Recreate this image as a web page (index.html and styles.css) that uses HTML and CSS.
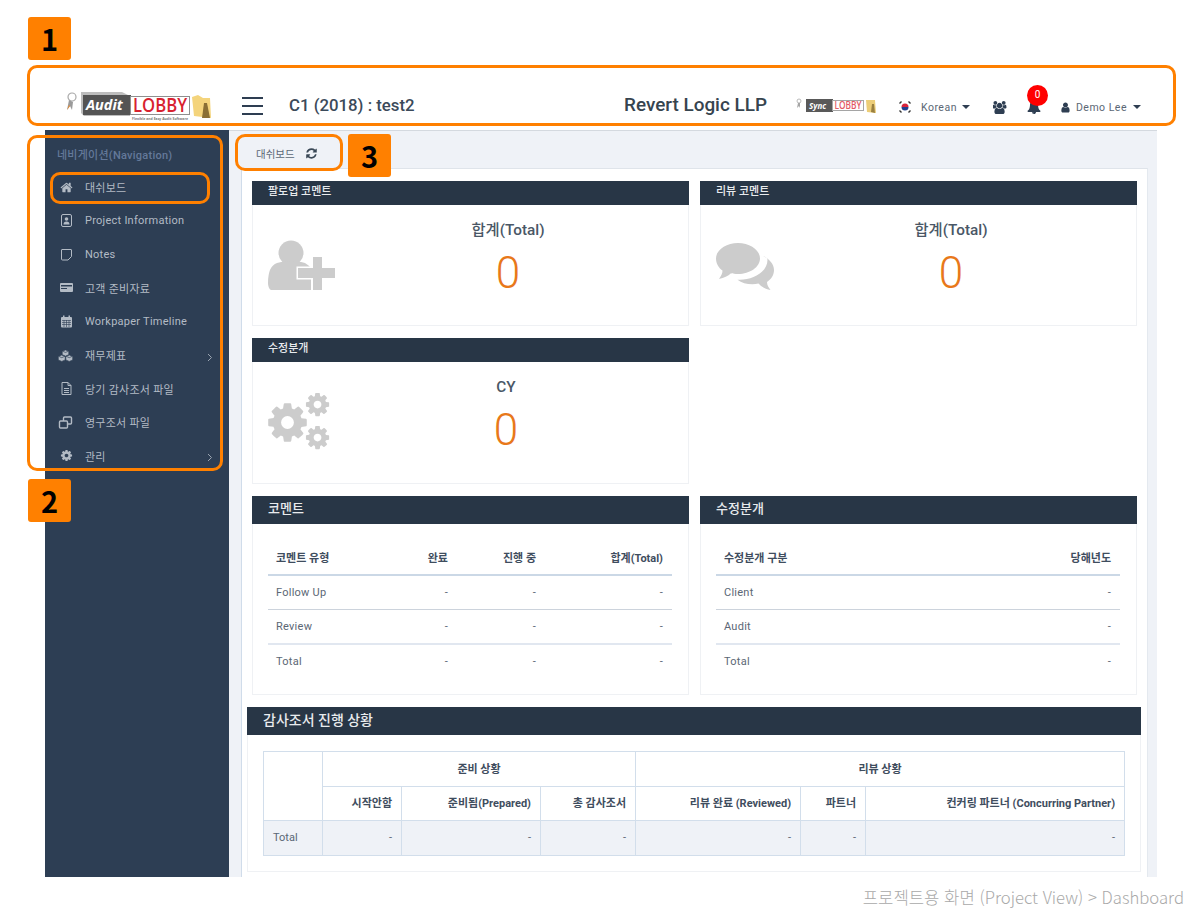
FILE: index.html
```html
<!DOCTYPE html>
<html lang="ko">
<head>
<meta charset="utf-8">
<title>Audit Lobby Dashboard</title>
<link rel="stylesheet" href="styles.css">
</head>
<body>
<header class="topbar">
  <svg class="logo" width="148" height="30" viewBox="0 0 148 30">
    <circle cx="8" cy="6" r="4" fill="#fff" stroke="#a9a9a9" stroke-width="1.2"/>
    <path d="M5 9 L3 19 L6 15 L8 19 L9 11 Z" fill="#9a9a9a"/>
    <path d="M3 19 L5 14 L6 15 Z" fill="#e98a2c"/>
    <path d="M17 1 H58 L66 5 V25 H20 L17 22 Z" fill="#bdbdbd"/>
    <rect x="19" y="4" width="48" height="20" fill="#545454"/>
    <text x="22" y="19" class="logo-audit">Audit</text>
    <rect x="66.500" y="5.500" width="59" height="18" fill="#fff" stroke="#8f8f8f"/>
    <text x="69" y="21" class="logo-lobby" textLength="54" lengthAdjust="spacingAndGlyphs">LOBBY</text>
    <text x="68" y="29" class="logo-tag" textLength="56" lengthAdjust="spacingAndGlyphs">Flexible and Easy Audit Software</text>
    <path d="M128 6 L134 4 L139 7 H146 L147 27 L130 25 Z" fill="#f4d47c"/>
    <path d="M138 27 L140 12 L143 12 L146 27 Z" fill="#8a6f35"/>
  </svg>
  <button class="burger" type="button" aria-label="menu"><span></span><span></span><span></span></button>
  <div class="project-title">C1 (2018) : test2</div>
  <div class="firm">Revert Logic LLP</div>
  <svg class="sync-logo" width="80" height="16" viewBox="0 0 80 16">
    <circle cx="3" cy="3" r="2" fill="#fff" stroke="#aaa" stroke-width=".8"/>
    <path d="M2 5 L1 10 L3 8 L4 10 L4 5 Z" fill="#a5a5a5"/>
    <rect x="10" y="1" width="27" height="13" fill="#595959"/>
    <text x="13" y="10.500" class="sync-text">Sync</text>
    <rect x="36.500" y="2.500" width="31" height="10" fill="#fff" stroke="#a5a5a5"/>
    <text x="38.500" y="11" class="sync-lobby" textLength="27" lengthAdjust="spacingAndGlyphs">LOBBY</text>
    <path d="M70 2 H79 L80 15 L71 14 Z" fill="#eccd78"/>
    <path d="M75 14 L76 6 L78 6 L79 15 Z" fill="#9a8040"/>
  </svg>
  <svg class="flag" width="14" height="14" viewBox="0 0 14 14">
    <circle cx="7" cy="7" r="7" fill="#fff"/>
    <path d="M3.500 7 A3.500 3.500 0 0 1 10.500 7 Z" fill="#d8243c"/>
    <path d="M3.500 7 A3.500 3.500 0 0 0 10.500 7 Z" fill="#22408f"/>
    <path d="M1.500 3.500 L3.500 1.500 M10.500 1.500 L12.500 3.500 M1.500 10.500 L3.500 12.500 M10.500 12.500 L12.500 10.500" stroke="#333" stroke-width="1.400"/>
  </svg>
  <span class="top-link lang">Korean</span><i class="caret"></i>
  <svg class="users" width="14" height="13" viewBox="0 0 1920 1792"><path fill="#2e3e52" d="M529 896q-162 5-265 128h-134q-82 0-138-40.500t-56-118.500q0-353 124-353 6 0 43.500 21t97.500 42.500 119 21.500q67 0 133-23-5 37-5 66 0 139 81 256zm1071 637q0 120-73 189.500t-194 69.500h-874q-121 0-194-69.500t-73-189.500q0-53 3.500-103.500t14-109 26.500-108.500 43-97.500 62-81 85.500-53.500 111.500-20q10 0 43 21.500t73 48 107 48 135 21.500 135-21.500 107-48 73-48 43-21.500q61 0 111.500 20t85.500 53.500 62 81 43 97.500 26.500 108.500 14 109 3.500 103.500zm-1024-1277q0 106-75 181t-181 75-181-75-75-181 75-181 181-75 181 75 75 181zm704 384q0 159-112.500 271.500t-271.500 112.500-271.500-112.500-112.500-271.500 112.500-271.500 271.500-112.500 271.500 112.500 112.500 271.500zm576 225q0 78-56 118.500t-138 40.500h-134q-103-123-265-128 81-117 81-256 0-29-5-66 66 23 133 23 59 0 119-21.500t97.500-42.500 43.500-21q124 0 124 353zm-128-609q0 106-75 181t-181 75-181-75-75-181 75-181 181-75 181 75 75 181z"/></svg>
  <div class="bell-wrap">
    <svg width="14" height="14" viewBox="0 0 1792 1792"><path fill="#2e3e52" d="M912 1696q0-16-16-16-59 0-101.500-42.500t-42.500-101.500q0-16-16-16t-16 16q0 73 51.500 124.500t124.500 51.500q16 0 16-16zm816-288q0 52-38 90t-90 38h-448q0 106-75 181t-181 75-181-75-75-181h-448q-52 0-90-38t-38-90q50-42 91-88t85-119.500 74.500-158.500 50-206 19.500-260q0-152 117-282.500t307-158.500q-8-19-8-39 0-40 28-68t68-28 68 28 28 68q0 20-8 39 190 28 307 158.500t117 282.500q0 139 19.500 260t50 206 74.500 158.500 85 119.500 91 88z"/></svg>
    <span class="badge">0</span>
  </div>
  <svg class="person" width="9" height="11" viewBox="200 100 1400 1600"><path fill="#2e3e52" d="M1536 1399q0 109-62.500 187t-150.500 78h-854q-88 0-150.500-78t-62.500-187q0-85 8.500-160.500t31.500-152 58.500-131 94-89 134.500-34.500q131 128 313 128t313-128q76 0 134.500 34.500t94 89 58.500 131 31.500 152 8.500 160.500zm-256-887q0 159-112.500 271.500t-271.500 112.500-271.500-112.500-112.500-271.500 112.500-271.500 271.500-112.500 271.500 112.500 112.500 271.500z"/></svg>
  <span class="top-link user-name">Demo Lee</span><i class="caret caret-user"></i>
</header>

<div class="app">
  <nav class="sidebar">
    <div class="nav-label">네비게이션(Navigation)</div>
    <a class="nav-item">
      <svg class="nav-icon" width="13" height="13" viewBox="0 0 1792 1792"><path d="M1472 992v480q0 26-19 45t-45 19h-384v-384h-256v384h-384q-26 0-45-19t-19-45v-480q0-1 .5-3t.5-3l575-474 575 474q1 2 1 6zm223-69l-62 74q-8 9-21 11h-3q-13 0-21-7l-692-577-692 577q-12 8-24 7-13-2-21-11l-62-74q-8-10-7-23.500t11-21.500l719-599q32-26 76-26t76 26l244 204v-195q0-14 9-23t23-9h192q14 0 23 9t9 23v408l219 182q10 8 11 21.500t-7 23.500z"/></svg>
      <span>대쉬보드</span>
    </a>
    <a class="nav-item">
      <svg class="nav-icon" width="13" height="13" viewBox="0 0 13 13"><rect x="1.500" y=".5" width="10" height="12" rx="1.500" fill="none" stroke="currentColor"/><circle cx="6.500" cy="5" r="1.800"/><path d="M3.500 10.500q0-3 3-3t3 3z"/></svg>
      <span>Project Information</span>
    </a>
    <a class="nav-item">
      <svg class="nav-icon" width="13" height="13" viewBox="0 0 13 13"><path d="M2 1.500h9a.5.5 0 0 1 .5.5v6.500l-3.500 3.500h-5.500a1 1 0 0 1-1-1v-9a.5.5 0 0 1 .5-.5z" fill="none" stroke="currentColor"/></svg>
      <span>Notes</span>
    </a>
    <a class="nav-item">
      <svg class="nav-icon" width="13" height="13" viewBox="0 0 13 13"><rect y="2" width="13" height="9" rx="1"/><rect x="1" y="4" width="11" height="1.500" fill="#2d3e54"/><rect x="1" y="7" width="6" height="1" fill="#2d3e54"/></svg>
      <span>고객 준비자료</span>
    </a>
    <a class="nav-item">
      <svg class="nav-icon" width="13" height="13" viewBox="0 0 13 13"><rect x="1" y="2" width="11" height="10.500" rx="1"/><rect x="3" y="0.500" width="1.500" height="3"/><rect x="8.500" y="0.500" width="1.500" height="3"/><path d="M2 5.500h9M2 7.500h9M2 9.500h9M4 5v7M6.500 5v7M9 5v7" stroke="#2d3e54" stroke-width=".6"/></svg>
      <span>Workpaper Timeline</span>
    </a>
    <a class="nav-item">
      <svg class="nav-icon nav-icon-wide" width="16" height="13" viewBox="0 0 16 13"><g fill="currentColor" stroke="#2d3e54" stroke-width=".7"><path d="M8 .5l3.500 1.500v3.600L8 7.200 4.500 5.600V2zM4 6l3.700 1.600v3.600L4 12.800.3 11.200V7.600zM12 6l3.700 1.600v3.600L12 12.800l-3.700-1.600V7.600z"/></g><path d="M8 3.200L5 2M8 3.200L11 2M4 8.800L1 7.500M4 8.800L7 7.500M12 8.800L9 7.500M12 8.800L15 7.500" stroke="#2d3e54" stroke-width=".7"/></svg>
      <span>재무제표</span>
      <svg class="chev" width="6" height="9" viewBox="0 0 6 9"><path d="M1 1l3.500 3.500L1 8" fill="none" stroke="currentColor"/></svg>
    </a>
    <a class="nav-item">
      <svg class="nav-icon" width="13" height="13" viewBox="0 0 13 13"><path d="M2 .5h6l3 3v9H2zM8 .5v3h3" fill="none" stroke="currentColor"/><path d="M4 6h5v1H4zM4 8h5v1H4zM4 10h5v1H4z"/></svg>
      <span>당기 감사조서 파일</span>
    </a>
    <a class="nav-item">
      <svg class="nav-icon nav-icon-wide" width="14" height="13" viewBox="0 0 14 13"><rect x="5" y="1" width="8" height="7" rx="1" fill="none" stroke="currentColor" stroke-width="1.400"/><rect x="1" y="5" width="8" height="7" rx="1" fill="#2d3e54" stroke="currentColor" stroke-width="1.400"/></svg>
      <span>영구조서 파일</span>
    </a>
    <a class="nav-item">
      <svg class="nav-icon" width="13" height="13" viewBox="0 0 1792 1792"><path d="M1152 896q0-106-75-181t-181-75-181 75-75 181 75 181 181 75 181-75 75-181zm512-109v222q0 12-8 23t-20 13l-185 28q-19 54-39 91 35 50 107 138 10 12 10 25t-9 23q-27 37-99 108t-94 71q-12 0-26-9l-138-108q-44 23-91 38-16 136-29 186-7 28-36 28h-222q-14 0-24.500-8.500t-11.500-21.500l-28-184q-49-16-90-37l-141 107q-10 9-25 9-14 0-25-11-126-114-165-168-7-10-7-23 0-12 8-23 15-21 51-66.500t54-70.500q-27-50-41-99l-183-27q-13-2-21-12.500t-8-23.500v-222q0-12 8-23t19-13l186-28q14-46 39-92-40-57-107-138-10-12-10-24 0-10 9-23 26-36 98.500-107.500t94.500-71.500q13 0 26 10l138 107q44-23 91-38 16-136 29-186 7-28 36-28h222q14 0 24.500 8.500t11.500 21.500l28 184q49 16 90 37l142-107q9-9 24-9 13 0 25 10 129 119 165 170 7 8 7 22 0 12-8 23-15 21-51 66.500t-54 70.500q26 50 41 98l183 28q13 2 21 12.500t8 23.500z"/></svg>
      <span>관리</span>
      <svg class="chev" width="6" height="9" viewBox="0 0 6 9"><path d="M1 1l3.500 3.500L1 8" fill="none" stroke="currentColor"/></svg>
    </a>
  </nav>

  <main class="content">
    <div class="tab">
      <span>대쉬보드</span>
      <svg width="11" height="11" viewBox="100 100 1600 1600"><path fill="#3a4856" d="M1639 1056q0 5-1 7-64 268-268 434.500t-478 166.500q-146 0-282.500-55t-243.500-157l-129 129q-19 19-45 19t-45-19-19-45v-448q0-26 19-45t45-19h448q26 0 45 19t19 45-19 45l-137 137q71 66 161 102t187 36q134 0 250-65t186-179q11-17 53-117 8-23 30-23h192q13 0 22.500 9.500t9.500 22.500zm25-800v448q0 26-19 45t-45 19h-448q-26 0-45-19t-19-45 19-45l138-138q-148-137-349-137-134 0-250 65t-186 179q-11 17-53 117-8 23-30 23h-199q-13 0-22.500-9.500t-9.500-22.500v-7q65-268 270-434.500t480-166.500q146 0 284 55.500t245 156.500l130-129q19-19 45-19t45 19 19 45z"/></svg>
    </div>
    <div class="panel">
      <section class="card stat-card">
        <h3 class="card-head">팔로업 코멘트</h3>
        <div class="stat-body">
          <svg class="stat-icon" width="67" height="50" viewBox="0 0 67 50">
            <circle cx="23" cy="13" r="12.500" fill="#ccc"/>
            <path d="M0 43q0-17 9-20 6-2 14-1 9-1 14 1 4 2 6 6v22H7q-7 0-7-8z" fill="#ccc"/>
            <path d="M45 17h9v11h13v10H54v12h-9V38H30V28h15z" fill="#ccc" stroke="#fff" stroke-width="3" paint-order="stroke"/>
          </svg>
          <div class="stat stat-a"><div class="stat-label">합계(Total)</div><div class="stat-num">0</div></div>
        </div>
      </section>
      <section class="card stat-card">
        <h3 class="card-head">리뷰 코멘트</h3>
        <div class="stat-body">
          <svg class="stat-icon stat-icon-comments" width="58" height="47" viewBox="0 0 58 47">
            <path fill="#ccc" d="M22 0c12 0 22 7 22 15.500S34 31 22 31c-3 0-5-.2-7-.8C12 33 8 35 3 36c2-3 3.500-5.500 3.500-8.500C2.500 24.800 0 20.500 0 15.500 0 7 10 0 22 0z"/>
            <path fill="#ccc" d="M47 13c6.500 3 11 8 11 14 0 5-2.500 9-7 12 0 3 1.500 5.500 3.500 8-5-1-9-3-12-6.500-2 .5-4 .7-6 .7-6 0-11-1.500-15-4.500 14 1 30-7 30-20 0-1.500-1.500-2.500-4.500-3.700z"/>
          </svg>
          <div class="stat stat-b"><div class="stat-label">합계(Total)</div><div class="stat-num">0</div></div>
        </div>
      </section>
      <section class="card stat-card">
        <h3 class="card-head">수정분개</h3>
        <div class="stat-body">
          <svg class="stat-icon stat-icon-gears" width="62" height="58" viewBox="0 0 62 58">
            <g fill="#ccc">
              <path transform="translate(-3 7) scale(0.0251)" d="M1152 896q0-106-75-181t-181-75-181 75-75 181 75 181 181 75 181-75 75-181zm512-109v222q0 12-8 23t-20 13l-185 28q-19 54-39 91 35 50 107 138 10 12 10 25t-9 23q-27 37-99 108t-94 71q-12 0-26-9l-138-108q-44 23-91 38-16 136-29 186-7 28-36 28h-222q-14 0-24.500-8.500t-11.500-21.500l-28-184q-49-16-90-37l-141 107q-10 9-25 9-14 0-25-11-126-114-165-168-7-10-7-23 0-12 8-23 15-21 51-66.500t54-70.500q-27-50-41-99l-183-27q-13-2-21-12.500t-8-23.500v-222q0-12 8-23t19-13l186-28q14-46 39-92-40-57-107-138-10-12-10-24 0-10 9-23 26-36 98.500-107.500t94.500-71.500q13 0 26 10l138 107q44-23 91-38 16-136 29-186 7-28 36-28h222q14 0 24.500 8.500t11.500 21.500l28 184q49 16 90 37l142-107q9-9 24-9 13 0 25 10 129 119 165 170 7 8 7 22 0 12-8 23-15 21-51 66.500t-54 70.500q26 50 41 98l183 28q13 2 21 12.500t8 23.500z"/>
              <path transform="translate(36 -2) scale(0.0151)" d="M1152 896q0-106-75-181t-181-75-181 75-75 181 75 181 181 75 181-75 75-181zm512-109v222q0 12-8 23t-20 13l-185 28q-19 54-39 91 35 50 107 138 10 12 10 25t-9 23q-27 37-99 108t-94 71q-12 0-26-9l-138-108q-44 23-91 38-16 136-29 186-7 28-36 28h-222q-14 0-24.500-8.500t-11.500-21.500l-28-184q-49-16-90-37l-141 107q-10 9-25 9-14 0-25-11-126-114-165-168-7-10-7-23 0-12 8-23 15-21 51-66.500t54-70.500q-27-50-41-99l-183-27q-13-2-21-12.500t-8-23.500v-222q0-12 8-23t19-13l186-28q14-46 39-92-40-57-107-138-10-12-10-24 0-10 9-23 26-36 98.500-107.500t94.500-71.500q13 0 26 10l138 107q44-23 91-38 16-136 29-186 7-28 36-28h222q14 0 24.500 8.500t11.500 21.500l28 184q49 16 90 37l142-107q9-9 24-9 13 0 25 10 129 119 165 170 7 8 7 22 0 12-8 23-15 21-51 66.500t-54 70.500q26 50 41 98l183 28q13 2 21 12.500t8 23.500z"/>
              <path transform="translate(36 31) scale(0.0151)" d="M1152 896q0-106-75-181t-181-75-181 75-75 181 75 181 181 75 181-75 75-181zm512-109v222q0 12-8 23t-20 13l-185 28q-19 54-39 91 35 50 107 138 10 12 10 25t-9 23q-27 37-99 108t-94 71q-12 0-26-9l-138-108q-44 23-91 38-16 136-29 186-7 28-36 28h-222q-14 0-24.500-8.500t-11.500-21.500l-28-184q-49-16-90-37l-141 107q-10 9-25 9-14 0-25-11-126-114-165-168-7-10-7-23 0-12 8-23 15-21 51-66.500t54-70.500q-27-50-41-99l-183-27q-13-2-21-12.500t-8-23.500v-222q0-12 8-23t19-13l186-28q14-46 39-92-40-57-107-138-10-12-10-24 0-10 9-23 26-36 98.500-107.500t94.500-71.500q13 0 26 10l138 107q44-23 91-38 16-136 29-186 7-28 36-28h222q14 0 24.500 8.500t11.500 21.500l28 184q49 16 90 37l142-107q9-9 24-9 13 0 25 10 129 119 165 170 7 8 7 22 0 12-8 23-15 21-51 66.500t-54 70.500q26 50 41 98l183 28q13 2 21 12.500t8 23.500z"/>
            </g>
          </svg>
          <div class="stat stat-c"><div class="stat-label">CY</div><div class="stat-num">0</div></div>
        </div>
      </section>
      <div class="empty-cell"></div>
      <section class="card table-card">
        <h3 class="card-head card-head-lg">코멘트</h3>
        <div class="table-wrap">
          <table class="list-table">
            <colgroup><col class="c-a"><col class="c-b"><col class="c-c"><col></colgroup>
            <thead><tr><th class="left">코멘트 유형</th><th>완료</th><th>진행 중</th><th>합계(Total)</th></tr></thead>
            <tbody>
              <tr><td class="left">Follow Up</td><td>-</td><td>-</td><td>-</td></tr>
              <tr class="row-pre-total"><td class="left">Review</td><td>-</td><td>-</td><td>-</td></tr>
              <tr><td class="left">Total</td><td>-</td><td>-</td><td>-</td></tr>
            </tbody>
          </table>
        </div>
      </section>
      <section class="card table-card">
        <h3 class="card-head card-head-lg">수정분개</h3>
        <div class="table-wrap">
          <table class="list-table">
            <thead><tr><th class="left">수정분개 구분</th><th>당해년도</th></tr></thead>
            <tbody>
              <tr><td class="left">Client</td><td>-</td></tr>
              <tr class="row-pre-total"><td class="left">Audit</td><td>-</td></tr>
              <tr><td class="left">Total</td><td>-</td></tr>
            </tbody>
          </table>
        </div>
      </section>
      <section class="card full-card">
        <h3 class="card-head card-head-lg card-head-full">감사조서 진행 상황</h3>
        <div class="progress-wrap">
          <table class="progress-table">
            <colgroup><col class="p1"><col class="p2"><col class="p3"><col class="p4"><col class="p5"><col class="p6"><col></colgroup>
            <thead>
              <tr><th rowspan="2"></th><th colspan="3" class="center">준비 상황</th><th colspan="3" class="center">리뷰 상황</th></tr>
              <tr><th>시작안함</th><th>준비됨(Prepared)</th><th>총 감사조서</th><th>리뷰 완료 (Reviewed)</th><th>파트너</th><th>컨커링 파트너 (Concurring Partner)</th></tr>
            </thead>
            <tbody>
              <tr><td class="left">Total</td><td>-</td><td>-</td><td>-</td><td>-</td><td>-</td><td>-</td></tr>
            </tbody>
          </table>
        </div>
      </section>
    </div>
  </main>
</div>

<footer class="caption">프로젝트용 화면 (Project View) &gt; Dashboard</footer>

<div class="mark mark-1">1</div>
<div class="mark mark-2">2</div>
<div class="mark mark-3">3</div>
<div class="outline outline-header"></div>
<div class="outline outline-sidebar"></div>
<div class="outline outline-item"></div>
<div class="outline outline-tab"></div>
</body>
</html>
```
FILE: styles.css
```css
* { box-sizing: border-box; }
html, body { margin: 0; padding: 0; }
body {
  position: relative;
  width: 1200px;
  height: 919px;
  overflow: hidden;
  background: #fff;
  font-family: Roboto, "Noto Sans CJK KR", sans-serif;
  font-size: 11px;
  color: #5b6775;
}

/* header */
.topbar {
  display: flex;
  align-items: center;
  height: 130px;
  padding: 84px 59px 0 64px;
}
.logo { flex: none; margin-top: -2px; }
.burger {
  display: flex;
  flex-direction: column;
  gap: 6px;
  width: 21px;
  margin: -2px 0 0 30px;
  padding: 0;
  border: 0;
  background: none;
}
.burger span { display: block; height: 2px; background: #2e3e52; }
.project-title {
  margin: -4px 0 0 26px;
  font-size: 16.800px;
  font-weight: 500;
  color: #3b4a5a;
}
.firm {
  margin: -6px 0 0 auto;
  font-size: 18.900px;
  font-weight: 500;
  color: #36444f;
}
.sync-logo { flex: none; margin: -2px 0 0 29px; }
.flag { flex: none; margin: 0 0 0 22px; }
.top-link { font-size: 10.500px; letter-spacing: .5px; color: #5b6775; }
.lang { margin-left: 9px; }
.caret {
  flex: none;
  width: 0;
  height: 0;
  margin-left: 5px;
  border-top: 4.500px solid #2e3e52;
  border-left: 4.500px solid transparent;
  border-right: 4.500px solid transparent;
}
.caret-user { margin-left: 6px; }
.users { flex: none; margin-left: 23px; }
.bell-wrap { position: relative; flex: none; display: flex; margin-left: 20px; }
.badge {
  position: absolute;
  left: 0;
  top: -15px;
  width: 21px;
  height: 21px;
  border-radius: 50%;
  background: #f00;
  color: #fff;
  font-size: 10px;
  line-height: 20px;
  text-align: center;
}
.person { flex: none; margin-left: 20px; }
.user-name { margin-left: 6px; }

/* shell */
.app {
  display: flex;
  width: 1112px;
  height: 747px;
  margin-left: 45px;
  overflow: hidden;
}
.sidebar {
  flex: none;
  width: 184px;
  background: #2d3e54;
  color: #b3bbc5;
  letter-spacing: .25px;
}
.nav-label {
  height: 40.400px;
  padding: 16px 0 0 12px;
  font-size: 11px;
  font-weight: 500;
  line-height: 20px;
  color: #64799a;
}
.nav-item {
  display: flex;
  align-items: center;
  height: 33.600px;
  padding: 0 16px 0 15px;
}
.nav-icon { flex: none; width: 13px; fill: currentColor; margin-right: 12px; }
.nav-icon-wide { margin-left: -2px; width: 15px; margin-right: 12px; }
.chev { flex: none; margin: 4px 0 0 auto; color: #9aa4b1; }

/* content */
.content {
  flex: 1;
  min-width: 0;
  display: flex;
  flex-direction: column;
  padding: 7px 9px 0 12px;
  background: #eff2f7;
  border-top: 1px solid #d4d9df;
}
.tab {
  display: flex;
  align-items: center;
  gap: 11px;
  flex: none;
  height: 30px;
  padding-left: 15px;
  color: #5b6775;
  font-size: 10.500px;
}
.panel {
  flex: 1;
  display: grid;
  grid-template-columns: 437px 437px;
  grid-template-rows: 145px 146px 199px 165px;
  gap: 12px 11px;
  padding: 12px 10px 0;
  background: #fff;
  border-top: 1px solid #dfe4ea;
  border-left: 1px solid #d0dcea;
  border-right: 1px solid #e4e9ef;
}
.card {
  min-width: 0;
  background: #fff;
  border: 1px solid #eff1f4;
  border-top: 0;
}
.card-head {
  margin: 0 -1px;
  height: 24px;
  padding-left: 16px;
  background: #283646;
  color: #e8ebee;
  font-size: 11px;
  font-weight: 500;
  line-height: 22px;
}
.card-head-lg { height: 28px; font-size: 13px; line-height: 26px; }
.card-head-full { font-size: 14px; }

.stat-body { position: relative; display: flex; }
.stat-icon { position: absolute; left: 15px; top: 35px; }
.stat-icon-comments { top: 38px; }
.stat-icon-gears { top: 31px; }
.stat {
  margin-left: auto;
  padding-top: 14px;
  text-align: center;
}
.stat-a { width: 360px; }
.stat-b { width: 370px; }
.stat-c { width: 364px; }
.stat-label {
  font-size: 15.300px;
  line-height: 22px;
  font-weight: 500;
  color: #4a5766;
}
.stat-num {
  margin-top: 8px;
  font-size: 44px;
  line-height: 48px;
  font-weight: 300;
  color: #e8781a;
}
.empty-cell { min-width: 0; }

/* list tables */
.table-wrap { padding: 16px 16px 0 15px; }
.list-table {
  width: 100%;
  border-collapse: collapse;
  font-size: 11px;
}
.c-a { width: 129px; }
.c-b { width: 60px; }
.c-c { width: 88px; }
.list-table th, .list-table td {
  padding: 0 9px 0 8px;
  text-align: right;
}
.list-table th {
  height: 35px;
  font-weight: 700;
  color: #3f4d5e;
  border-bottom: 2px solid #cbd8e6;
}
.list-table td { height: 34.500px; border-bottom: 1px solid #ccd3dc; letter-spacing: .25px; }
.list-table .row-pre-total td { border-bottom: 2px solid #e1e7f0; }
.list-table tr:last-child td { border-bottom: 0; }
.list-table .left { text-align: left; }

/* progress */
.full-card { grid-column: 1 / -1; margin: 0 -4px 0 -5px; }
.progress-wrap { padding: 16px 16px 0 15px; }
.progress-table {
  width: 862px;
  table-layout: fixed;
  border-collapse: collapse;
  font-size: 11px;
}
.p1 { width: 59px; }
.p2 { width: 79px; }
.p3 { width: 139px; }
.p4 { width: 95px; }
.p5 { width: 165px; }
.p6 { width: 65px; }
.progress-table th, .progress-table td {
  height: 34.500px;
  padding: 0 9px;
  text-align: right;
  border: 1.500px solid #d2deeb;
}
.progress-table th { font-weight: 700; color: #3f4d5e; padding-bottom: 2px; }
.progress-table .center { text-align: center; }
.progress-table td { background: #eff2f7; }
.progress-table .left { text-align: left; }

/* caption */
.caption {
  display: flex;
  justify-content: flex-end;
  align-items: center;
  height: 42px;
  padding: 0 16px 2px 0;
  font-family: "Noto Sans CJK KR", sans-serif;
  font-size: 16.700px;
  font-weight: 300;
  color: #a9a9a9;
}

/* annotations over the screenshot */
.mark {
  position: absolute;
  width: 43px;
  height: 43px;
  border-radius: 3px;
  background: #ff8000;
  color: #000;
  font-family: "Noto Sans CJK KR", sans-serif;
  font-size: 29px;
  font-weight: 700;
  line-height: 42px;
  text-align: center;
}
.mark-1 { left: 28px; top: 17px; }
.mark-2 { left: 28px; top: 479px; }
.mark-3 { left: 348px; top: 134px; }
.outline {
  position: absolute;
  border: 3px solid #ff8000;
  border-radius: 10px;
}
.outline-header { left: 27px; top: 65px; width: 1149px; height: 61px; }
.outline-sidebar { left: 27px; top: 135px; width: 196px; height: 336px; }
.outline-item { left: 50px; top: 172px; width: 160px; height: 32px; }
.outline-tab { left: 235px; top: 134px; width: 108px; height: 37px; }

/* logo text */
.logo-audit { font: italic 700 14.500px "Open Sans", sans-serif; fill: #fff; }
.logo-lobby { font: 600 20px "Open Sans", sans-serif; fill: #d8222f; }
.logo-tag { font: 700 3.500px "Open Sans", sans-serif; fill: #777; }
.sync-text { font: italic 700 8px "Open Sans", sans-serif; fill: #fff; }
.sync-lobby { font: 600 10.500px "Open Sans", sans-serif; fill: #e35a66; }
```
